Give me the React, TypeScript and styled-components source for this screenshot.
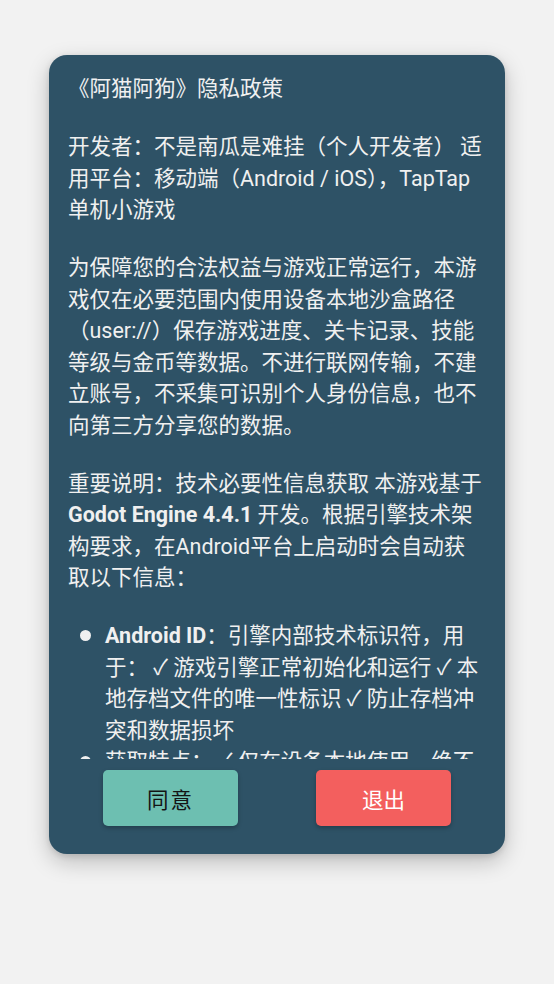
import React from "react";
import styled, { createGlobalStyle } from "styled-components";

const GlobalStyle = createGlobalStyle`
  html, body {
    margin: 0;
    padding: 0;
    background: #f2f2f2;
  }
  body {
    font-family: Roboto, "Noto Sans CJK SC", sans-serif;
  }
`;

const Page = styled.div`
  min-height: 984px;
  display: flex;
  justify-content: center;
  align-items: flex-start;
  padding-top: 55px;
  box-sizing: border-box;
`;

const Card = styled.div`
  width: 456px;
  height: 799px;
  box-sizing: border-box;
  background: #2e5266;
  border-radius: 18px;
  box-shadow: 0 8px 22px rgba(0, 0, 0, 0.22), 0 2px 6px rgba(0, 0, 0, 0.12);
  display: flex;
  flex-direction: column;
  padding: 18px 0 28px;
`;

const Scroll = styled.div`
  flex: 1;
  min-height: 0;
  overflow: hidden;
  padding: 0 21px 0 19px;
  color: #f0f0f0;
  font-family: Roboto, "Noto Sans CJK SC", sans-serif;
  font-size: 21.5px;
  line-height: 31.5px;
`;

const Para = styled.p`
  margin: 0 0 26.5px;
`;

const Strong = styled.b`
  font-weight: 700;
`;

const List = styled.ul`
  list-style: none;
  margin: 0;
  padding: 0 0 0 37px;
`;

const Item = styled.li`
  position: relative;
  &::before {
    content: "";
    position: absolute;
    left: -25px;
    top: 10px;
    width: 11px;
    height: 11px;
    border-radius: 50%;
    background: #f0f0f0;
  }
`;

const ButtonRow = styled.div`
  display: flex;
  justify-content: center;
  gap: 78px;
  margin-top: 11px;
`;

const Button = styled.button<{ $variant: "agree" | "exit" }>`
  width: 135px;
  height: 56px;
  border: none;
  border-radius: 5px;
  background: ${(p) => (p.$variant === "agree" ? "#6dbfb1" : "#f35f5e")};
  color: ${(p) => (p.$variant === "agree" ? "#141414" : "#ffffff")};
  font-family: Roboto, "Noto Sans CJK SC", sans-serif;
  font-size: 21.5px;
  letter-spacing: ${(p) => (p.$variant === "agree" ? "2px" : "0")};
  box-shadow: 0 2px 4px rgba(0, 0, 0, 0.25);
  cursor: pointer;
  padding: 0;
`;

export default function App() {
  return (
    <>
      <GlobalStyle />
      <Page>
        <Card>
          <Scroll>
            <Para>《阿猫阿狗》隐私政策</Para>
            <Para>
              开发者：不是南瓜是难挂（个人开发者） 适用平台：移动端（Android / iOS），TapTap单机小游戏
            </Para>
            <Para>
              为保障您的合法权益与游戏正常运行，本游戏仅在必要范围内使用设备本地沙盒路径（user://）保存游戏进度、关卡记录、技能等级与金币等数据。不进行联网传输，不建立账号，不采集可识别个人身份信息，也不向第三方分享您的数据。
            </Para>
            <Para>
              重要说明：技术必要性信息获取 本游戏基于<Strong>Godot Engine 4.4.1</Strong> 开发。根据引擎技术架构要求，在Android平台上启动时会自动获取以下信息：
            </Para>
            <List>
              <Item>
                <Strong>Android ID</Strong>：引擎内部技术标识符，用于： ✓ 游戏引擎正常初始化和运行 ✓ 本地存档文件的唯一性标识 ✓ 防止存档冲突和数据损坏
              </Item>
              <Item>
                获取特点： ✓ 仅在设备本地使用，绝不上传至任何服务器 ✓ 不用于任何形式的用户追踪
              </Item>
            </List>
          </Scroll>
          <ButtonRow>
            <Button $variant="agree">同意</Button>
            <Button $variant="exit">退出</Button>
          </ButtonRow>
        </Card>
      </Page>
    </>
  );
}
